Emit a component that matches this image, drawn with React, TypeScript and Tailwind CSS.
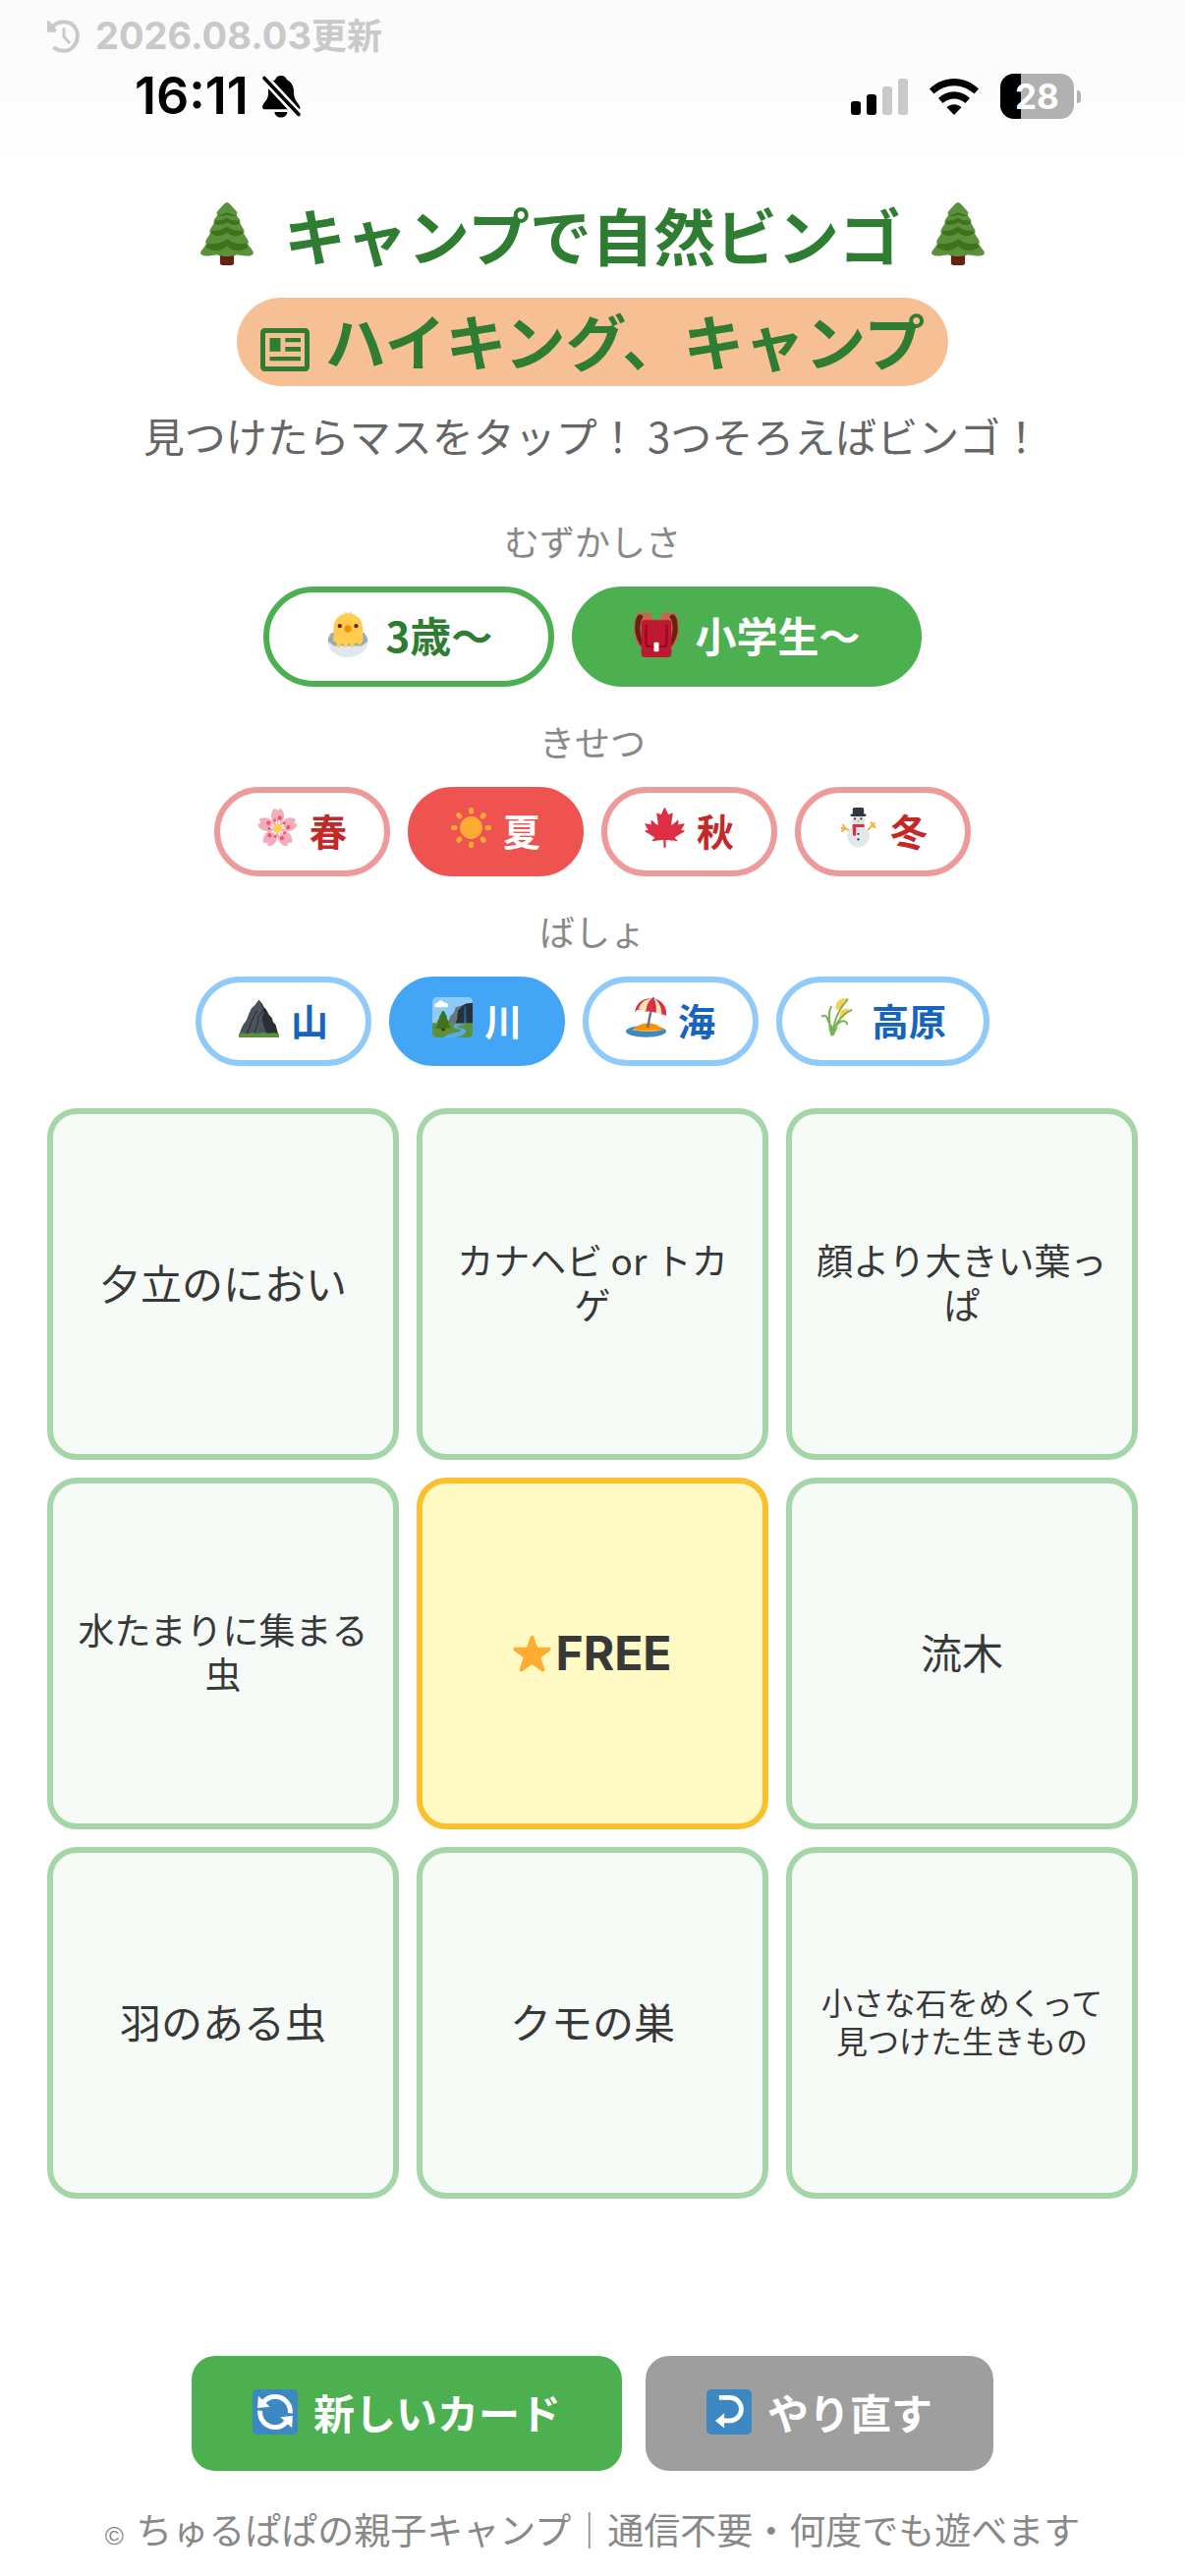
import { FunctionComponent, ReactNode, useState } from "react";

type IconProps = {
  className?: string;
};

type EmojiProps = IconProps & {
  children: ReactNode;
};

const Emoji: FunctionComponent<EmojiProps> = ({ className = "", children }) => (
  <svg viewBox="0 0 36 36" aria-hidden="true" className={`shrink-0 ${className}`}>
    {children}
  </svg>
);

const Tree: FunctionComponent<IconProps> = ({ className }) => (
  <Emoji className={className}>
    <path fill="#662113" d="M14 28h8v6.500q0 1.500-1.500 1.500h-5q-1.500 0-1.500-1.500z" />
    <path
      fill="#5c913b"
      d="M18 0c1.200 0 2.500 2 4.800 4.300.8.800 1.600 2.200.6 2.800.8 1.800 3 3.500 2 4.600 .8 2 3.400 4.600 2.200 5.900 .8 2.300 3.700 4.600 2.300 6 1 2.400 4 4.400 3 6.100-1.200 1.700-6.400.6-9 .2-3.600 1.300-8.200 1.300-11.800 0-2.600.4-7.800 1.500-9-.2-1-1.700 2-3.700 3-6.100-1.400-1.400 1.500-3.700 2.300-6-1.200-1.300 1.400-3.900 2.200-5.900-1-1.100 1.200-2.800 2-4.600-1-.6-.2-2 .6-2.800C15.500 2 16.800 0 18 0z"
    />
    <path fill="#3e721d" d="M12.600 7.500Q16 7 18 5.600q2 1.400 5.400 1.900-3.400 1-5.400-.4-2 1.400-5.400.4z" />
    <path fill="#3e721d" d="M10.600 11.900 11.800 10.400q3.400.4 6.200-1.600 2.800 2 6.200 1.600l1.200 1.500q-4 2.400-7.400-.6-3.400 3-7.400.6z" />
    <path fill="#3e721d" d="M8.500 17.600 10 16q4.400.7 8-2.200 3.600 2.900 8 2.200l1.500 1.600q-5 3.600-9.500-.4-4.500 4-9.500.4z" />
    <path fill="#3e721d" d="M5.600 25.600 7.400 23.400q6 1.200 10.600-2.400 4.600 3.600 10.600 2.400l1.800 2.200q-6.400 4.400-12.400-.6-6 5-12.400.6z" />
  </Emoji>
);

const Chick: FunctionComponent<IconProps> = ({ className }) => (
  <Emoji className={className}>
    <path fill="#99aab5" d="M5 16.500C3 19 1.500 22 2.500 25l4.500 3h22l4.500-3c1-3-.5-6-2.500-8.500z" />
    <path fill="#e1e8ed" d="M2.400 23.500c-.6 7 6.600 12.500 15.600 12.500s16.200-5.500 15.600-12.500L29 27H7z" />
    <path
      fill="#ffcc4d"
      d="M18 1.400C17 .2 16 .2 15 .3l1 1C9 2.400 6.500 8 6.500 14v9l1.800.8 2.400 5.200 3-4.300 2.800 4 2.300-4 3 4 2.400-4.500 3.500 2 2.300-3.200V14C30 8 27 2.400 20.500 1.300l1-1C20 .2 19 .2 18 1.400z"
    />
    <circle cx="11.600" cy="11" r="1.700" fill="#662113" />
    <circle cx="24.600" cy="11" r="1.700" fill="#662113" />
    <circle cx="18" cy="13.300" r="2.900" fill="#f4900c" />
  </Emoji>
);

const Backpack: FunctionComponent<IconProps> = ({ className }) => (
  <Emoji className={className}>
    <path fill="#c1694f" d="M0 13C0 5 2 .5 5 .2h7c2 .6 2.500 3 3 5.800v4H7v15L4 27C1 23 0 18 0 13zM36 13c0-8-2-12.500-5-12.800h-7c-2 .6-2.500 3-3 5.800v4h8v15l3 2c3-4 4-9 4-14z" />
    <path fill="#662113" d="M1 13c0-7 1.500-10.800 4-11 2 0 2.800 1.300 2 2.500C5.500 7 5 10 5 13c0 4 1 7 1.500 9v6C3 24 1 18 1 13zM35 13c0-7-1.500-10.800-4-11-2 0-2.800 1.300-2 2.500C30.500 7 31 10 31 13c0 4-1 7-1.500 9v6c3.500-4 5.500-10 5.500-15z" />
    <rect x="6" y="6" width="24" height="30" rx="3" fill="#be1931" />
    <path fill="none" stroke="#a0041e" strokeWidth="1.800" strokeLinecap="round" d="M9.800 11v14q0 2.500 2.500 2.500h11.400q2.500 0 2.500-2.500V11" />
    <path fill="#c1694f" d="M7 6.500Q8 6 9.500 6h17q1.500 0 2.500.5z" />
    <rect x="16" y="24" width="4" height="7.500" rx="1" fill="#fff" />
  </Emoji>
);

const petals = [0, 72, 144, 216, 288];

const Blossom: FunctionComponent<IconProps> = ({ className }) => (
  <Emoji className={className}>
    {petals.map((angle) => (
      <g key={angle} transform={`rotate(${angle} 18 18.500)`}>
        <path fill="#f4abba" d="M18 18.500C14 14 11.600 10 12.300 6c.5-3 2-4.600 3.300-5.200.8-.3 1 .7 1.600 1.800l.8-1 .8 1c.6-1.100.800-2.100 1.600-1.800C21.700 1.400 23.200 3 23.700 6c.7 4-1.700 8-5.700 12.500z" />
      </g>
    ))}
    {petals.map((angle) => (
      <g key={angle} transform={`rotate(${angle} 18 18.500)`}>
        <path stroke="#fff" strokeWidth="1.400" d="m18 18.500-1.200-6.500M18 18.500l2-6.500" />
        <circle cx="20" cy="9.200" r="1.900" fill="#ea596e" />
        <circle cx="15.500" cy="11.500" r="1.300" fill="#ea596e" />
      </g>
    ))}
    <circle cx="18" cy="18.500" r="4" fill="#ffcc4d" />
  </Emoji>
);

const rays = [0, 45, 90, 135, 180, 225, 270, 315];

const Sun: FunctionComponent<IconProps> = ({ className }) => (
  <Emoji className={className}>
    <circle cx="18" cy="18" r="10" fill="#ffac33" />
    {rays.map((angle) => (
      <rect key={angle} x="15.800" y="0" width="4.400" height="5.800" rx="2.200" fill="#ffac33" transform={`rotate(${angle} 18 18)`} />
    ))}
  </Emoji>
);

const MapleLeaf: FunctionComponent<IconProps> = ({ className }) => (
  <Emoji className={className}>
    <path
      fill="#dd2e44"
      d="M36 20.917c0-.688-2.895-.5-3.125-1s3.208-4.584 2.708-5.500-5.086 1.167-5.375.708c-.288-.458.292-3.500-.208-3.875s-5.250 4.916-5.917 4.292c-.666-.625 1.542-10.500 1.086-10.698-.456-.198-3.419 1.365-3.793 1.282C21.002 6.042 18.682 0 18 0s-3.002 6.042-3.376 6.125c-.374.083-3.337-1.480-3.793-1.282-.456.198 1.752 10.073 1.085 10.698C11.250 16.166 6.500 10.875 6 11.250s.08 3.417-.208 3.875c-.289.458-4.875-1.625-5.375-.708s2.939 5 2.708 5.500-3.125.312-3.125 1 8.438 5.235 9 5.771c.562.535-2.914 2.802-2.417 3.229.576.496 3.839-.83 10.417-.957V35c0 .553.448 1 1 1 .553 0 1-.447 1-1v-6.040c6.577.127 9.841 1.453 10.417.957.496-.428-2.979-2.694-2.417-3.229.562-.536 9-5.084 9-5.771z"
    />
  </Emoji>
);

const Snowman: FunctionComponent<IconProps> = ({ className }) => (
  <Emoji className={className}>
    <path fill="none" stroke="#ffac33" strokeWidth="1.700" strokeLinecap="round" strokeLinejoin="round" d="m10.500 20.500-4-1.800m-3.300-.2 3.300.2M4.500 15.500l2 3.200M3.500 21l3-2.300M26 20.500l4.500-4.500m-1-3 1 3 2.500 1.500M30.500 16l2-2" />
    <circle cx="18" cy="25.500" r="10" fill="#e1e8ed" />
    <circle cx="18" cy="12" r="6" fill="#e1e8ed" />
    <path fill="#dd2e44" d="M12.800 15h10.600v2.600h-7.400v7q-1.300 1.200-2.800.2z" />
    <path fill="#31373d" d="M13 6.500V1.500Q13 0 14.500 0h7Q23 0 23 1.500v5z" />
    <rect x="11" y="5.800" width="14" height="2" rx="1" fill="#31373d" />
    <circle cx="15" cy="10" r="1" fill="#31373d" />
    <circle cx="20.600" cy="10" r="1" fill="#31373d" />
    <circle cx="18" cy="12" r="1" fill="#ffac33" />
    <circle cx="18" cy="23.500" r="1" fill="#31373d" />
    <circle cx="18" cy="28.500" r="1" fill="#31373d" />
  </Emoji>
);

const Mountain: FunctionComponent<IconProps> = ({ className }) => (
  <Emoji className={className}>
    <path fill="#292f33" d="m18 2.500 3 3.500 1.500 3 2 2 2.500 4.500 3 3.500.500 3 2.500 2.500L35.500 34h-35l2.500-7.500 4-6 4-10 4-4z" />
    <path fill="#4b545d" d="m18 2.500 2 4 2 4.500.500 3-1.500 4 1.500 6 3.500 9H.6L3 26.500l2-3.500 2-1 2-7 2.500-4 2-2.500z" />
    <path fill="none" stroke="#292f33" strokeWidth=".9" d="m16.500 12-3 5-2.500 6-3.500 9M22.400 11l-4.800 6.500-.6 5-3 9.500M21 18l1.500 7 3 7" />
    <path fill="#5c913b" d="M0 36v-3.500l4-.5 4 .6 4-.8 5 .7 5-.8 4 .5 5-.3 5 .6V36z" />
  </Emoji>
);

const River: FunctionComponent<IconProps> = ({ className }) => (
  <Emoji className={className}>
    <rect width="36" height="36" rx="4" fill="#8ccaf7" />
    <path fill="#fff" d="M4 9Q1.500 9 2 7t2.500-1.700Q5.500 2.500 8 3t2.500 2Q13.500 4.500 14 7t-2 2z" />
    <path fill="#66757f" d="M13 26 16 17l3-3 2-5 5-1.500 10 1V26z" />
    <path fill="#292f33" d="m20 25 2-5 1-8 4-4.500 3-1.800 6-.7v21z" />
    <path fill="#226699" d="M28.500 9 30 7.500 30.500 25H28z" />
    <path fill="#5c913b" d="M0 23h36v9q0 4-4 4H4q-4 0-4-4z" />
    <path fill="#55acee" d="M29.500 24h-7q-5 .8-3.500 2.800 1.500 1.200 5 1.700 3 1 0 2.500-9 1.500-14.500 5H20q9-1.500 10-5.500 0-2.500-7-3.500-2-.8 1-1.500 4-.5 5.500-1.500z" />
    <rect x="8" y="26" width="3.500" height="4" rx="1" fill="#662113" />
    <path fill="#3e721d" d="M9.600 12q1 0 2 2.500t1.500 2.800-.2 1.200q.8 2.500 2 3.500 0 1-.8 1.200.500 2 2.400 3.400 0 1.300-2.500.900-4 1-8.500.3-3 .3-3-.8 2.300-1.800 2.600-3.600-1-.2-1-1.200 1.500-1.500 2.200-3.700-.6-.6.200-1.500T8 14q.8-2 1.600-2z" />
  </Emoji>
);

const Beach: FunctionComponent<IconProps> = ({ className }) => (
  <Emoji className={className}>
    <ellipse cx="18" cy="30.500" rx="18" ry="5.300" fill="#3b88c3" />
    <path fill="#ffac33" d="M5.500 29.500Q12 23 20 23t13.500 6.500Q27 31 18 30.700T5.500 29.500z" />
    <path fill="#f4900c" d="M7 29.200Q12 23.500 20 23.500t13.500 5.800Q31 30.500 28 29.300q-4-1-8 .2-6-1-13-.3z" />
    <path fill="none" stroke="#66757f" strokeWidth="2.200" d="m22.300 12-2.800 15" />
    <path fill="#dd2e44" d="M24.300.8C15 .5 9 5 8 14q1.500-3.500 5-3 2.500-1 5 2.500 3-2 8.500.5 3-1.500 5 1.500 3-.5 4.500 1.500C37 9 33 3 24.300.8z" />
    <path fill="#ffe8b6" d="M23.500.8C16.500 2 12 6 11.500 11q4-1 6.500 2.500C18 8 20 3.500 23.500.8zM25 .8c2 4 2.500 9 1.700 13.500q3-1.500 5.300 1.700C32 9 29.500 4 25 .8z" />
    <path stroke="#66757f" strokeWidth="1.600" d="M24.500 0v2" />
  </Emoji>
);

const Rice: FunctionComponent<IconProps> = ({ className }) => (
  <Emoji className={className}>
    <path fill="#ffcc4d" d="M15 11c-2-5 3-11 9.500-10q-3 3-4 6-2 5-5.500 4zM18 19.500c-1-6 3-11 8.300-9q-1 3-3 5-2.500 4-5.300 4z" />
    <path fill="none" stroke="#77b255" strokeWidth="1.700" strokeLinecap="round" d="M25 2C20 8 13 17 12 33M28.500 11.500C22 14 14 22 12.500 33M10.500 8.500C7 14 9 24 11 33M2.500 17C6 15 7.500 19 8 22M14 27c4-7 8-6 9.500-5q1.500 1 1 2" />
    <path fill="#77b255" d="M8 21q0 7 2 13.500h2.500L17 26l-4 3-2-5-1 4z" />
  </Emoji>
);

const Star: FunctionComponent<IconProps> = ({ className }) => (
  <Emoji className={className}>
    <path fill="#ffac33" stroke="#ffac33" strokeWidth="3.600" strokeLinejoin="round" d="m18 2.600 3.800 11h12L24.200 20.800 28 32.800l-10-7.200-10 7.200 3.800-12L2.200 13.600h12z" />
  </Emoji>
);

const Reload: FunctionComponent<IconProps> = ({ className }) => (
  <Emoji className={className}>
    <rect width="36" height="36" rx="4" fill="#3b88c3" />
    {[0, 180].map((angle) => (
      <g key={angle} transform={`rotate(${angle} 18 18)`}>
        <path fill="none" stroke="#fff" strokeWidth="3.800" d="M30 19A12 12 0 0 0 8.500 10.500" />
        <path fill="#fff" d="M4.600 5.300 4 14.900l9.800-1.100z" />
      </g>
    ))}
  </Emoji>
);

const Undo: FunctionComponent<IconProps> = ({ className }) => (
  <Emoji className={className}>
    <rect width="36" height="36" rx="4" fill="#3b88c3" />
    <path fill="none" stroke="#fff" strokeWidth="3.800" d="M10 6.600h8.500a9.200 9.200 0 0 1 0 18.400H13" />
    <path fill="#fff" d="m7 25 7.200-6v12z" />
  </Emoji>
);

const StatusBar = () => (
  <div className="flex items-center justify-between pl-[137px] pr-[106px] h-[46px]">
    <div className="flex items-center gap-[14px] text-[52px] leading-[46px] font-semibold text-black font-['Inter',sans-serif]">
      16:11
      <svg viewBox="0 0 39 43" aria-hidden="true" className="w-[39px] h-[43px]">
        <path d="M19 0c3 0 5 1.500 5.800 4C30 6.500 32 11 32 17c0 9 5.500 11 6.500 15.500 0 1.500-1 1.800-2.500 1.800H3C1 34.300 0 33.500 0 32c.5-5.500 6.500-6 6-15C6 11 8.500 6.500 13.200 4 14 1.500 16 0 19 0zM12.300 37h13.200c-.5 3.500-3 5.500-6.600 5.500s-6-2-6.600-5.500z" />
        <path d="M0 0 39 42" stroke="#fdfdfd" strokeWidth="9" />
        <path d="M2 2.500 37 39.500" stroke="#000" strokeWidth="3.600" strokeLinecap="round" />
      </svg>
    </div>
    <div className="flex items-center">
      <svg viewBox="0 0 58 37" aria-hidden="true" className="w-[58px] h-[37px]">
        <rect x="0" y="23" width="10" height="14" rx="3" />
        <rect x="16" y="16" width="10" height="21" rx="3" />
        <rect x="32" y="8" width="10" height="29" rx="3" fill="#c9c9c9" />
        <rect x="48" y="0" width="10" height="37" rx="3" fill="#c9c9c9" />
      </svg>
      <svg viewBox="0 0 50 37" aria-hidden="true" className="w-[50px] h-[37px] ml-[22px]">
        <path d="M0 10.500C14-3.500 36-3.500 50 10.500l-4.500 5C33 4.500 17 4.500 4.500 15.500z" />
        <path d="M9 20c9-9 23-9 32 0l-4.600 5c-6.500-6-16.300-6-22.800 0z" />
        <path d="M17.500 29.200c4.300-4 10.700-4 15 0L25 37z" />
      </svg>
      <div className="ml-[22px] w-[75px] h-[46px] flex items-center">
        <div className="w-full h-[46px] rounded-[14px] bg-[linear-gradient(90deg,#000_28%,#b1b1b1_28%)] text-center text-[35px] leading-[46px] font-bold text-white font-['Inter',sans-serif]">
          28
        </div>
      </div>
      <div className="ml-[3px] w-1 h-[13px] rounded-r-full bg-[#b1b1b1]" />
    </div>
  </div>
);

type ChoiceProps = {
  label: string;
  icon: FunctionComponent<IconProps>;
  selected: boolean;
  tone: "green" | "red" | "blue";
  onSelect: () => void;
};

const tones = {
  green: { on: "border-[#4caf50] bg-[#4caf50] text-white", off: "border-[#4caf50] bg-white text-[#2e7d32]" },
  red: { on: "border-[#ef5350] bg-[#ef5350] text-white", off: "border-[#ef9a9a] bg-white text-[#c62828]" },
  blue: { on: "border-[#42a5f5] bg-[#42a5f5] text-white", off: "border-[#90caf9] bg-white text-[#1565c0]" },
};

const Choice: FunctionComponent<ChoiceProps> = ({ label, icon: Icon, selected, tone, onSelect }) => {
  const large = tone === "green";
  return (
    <button
      type="button"
      aria-pressed={selected}
      onClick={onSelect}
      className={`flex items-center rounded-full border-6 font-bold whitespace-nowrap ${
        large ? "h-[102px] px-[57px] gap-4 text-[42px]" : "h-[91px] px-[38px] gap-3 text-[38px]"
      } ${selected ? tones[tone].on : tones[tone].off}`}
    >
      <Icon className={large ? "size-[46px] mb-1" : "size-[41px] mb-2"} />
      <span className="leading-[54px] mb-1">{label}</span>
    </button>
  );
};

type Option = {
  label: string;
  icon: FunctionComponent<IconProps>;
};

type ChoiceGroupProps = {
  title: string;
  tone: "green" | "red" | "blue";
  options: Option[];
  initial: string;
};

const ChoiceGroup: FunctionComponent<ChoiceGroupProps> = ({ title, tone, options, initial }) => {
  const [value, setValue] = useState(initial);
  return (
    <section className="flex flex-col items-center gap-5">
      <h2 className="text-[36px] leading-[54px] text-[#888]">{title}</h2>
      <div className="flex justify-center gap-[18px]">
        {options.map((option) => (
          <Choice
            key={option.label}
            label={option.label}
            icon={option.icon}
            tone={tone}
            selected={option.label === value}
            onSelect={() => setValue(option.label)}
          />
        ))}
      </div>
    </section>
  );
};

const levels: Option[] = [
  { label: "3歳〜", icon: Chick },
  { label: "小学生〜", icon: Backpack },
];

const seasons: Option[] = [
  { label: "春", icon: Blossom },
  { label: "夏", icon: Sun },
  { label: "秋", icon: MapleLeaf },
  { label: "冬", icon: Snowman },
];

const places: Option[] = [
  { label: "山", icon: Mountain },
  { label: "川", icon: River },
  { label: "海", icon: Beach },
  { label: "高原", icon: Rice },
];

const cells = [
  "夕立のにおい",
  "カナヘビ or トカゲ",
  "顔より大きい葉っぱ",
  "水たまりに集まる虫",
  "FREE",
  "流木",
  "羽のある虫",
  "クモの巣",
  "小さな石をめくって見つけた生きもの",
];

// longer phrases get a smaller face so they stay on two lines
const cellText = (text: string) => {
  if (text.length > 12) return "text-[32px] leading-[39px]";
  if (text.length > 7) return "text-[37px] leading-[45px]";
  return "text-[42px] leading-[54px]";
};

const BingoCell: FunctionComponent<{ text: string }> = ({ text }) => {
  if (text === "FREE") {
    return (
      <button
        type="button"
        className="aspect-square flex items-center justify-center gap-1 rounded-[30px] border-6 border-[#fbc02d] bg-[#fff9c4] text-[48px] font-bold text-[#383838] font-['Inter',sans-serif]"
      >
        <Star className="size-[39px]" />
        FREE
      </button>
    );
  }
  return (
    <button
      type="button"
      className={`aspect-square flex items-center justify-center rounded-[30px] border-6 border-[#a5d6a7] bg-[#f6fbf8] px-[18px] pb-1 text-[#383838] ${cellText(text)}`}
    >
      {text}
    </button>
  );
};

const App = () => (
  <div className="bg-[linear-gradient(180deg,#fafafa_0px,#fff_170px)] text-[#383838] font-['Noto_Sans_CJK_JP',sans-serif]">
    <div className="flex items-center gap-4 pt-4 pl-12 text-[#c9c9c9]">
      <svg viewBox="0 0 33 34" fill="none" aria-hidden="true" className="w-[33px] h-[34px]">
        <path d="M4 9.500C10.500-.5 24.500 0 29.500 10c4.500 10.500-3 22.200-13 21.800-3.500 0-6-1-8.500-2.600" stroke="currentColor" strokeWidth="4" strokeLinecap="round" />
        <path d="M0 1.500C1 .5 2 1 3 2.300l6 7.200c1 1.500.5 3.300-1.500 3.300H1.500C.5 12.800 0 12.300 0 11z" fill="currentColor" />
        <path d="M17 9.500v7.800l5 5.700" stroke="currentColor" strokeWidth="3" strokeLinecap="round" strokeLinejoin="round" />
      </svg>
      <span className="text-[38px] leading-10 font-bold font-['Inter','Noto_Sans_CJK_JP',sans-serif]">
        2026.08.03<span className="text-[36px]">更新</span>
      </span>
    </div>
    <div className="pt-[18px]">
      <StatusBar />
    </div>

    <main className="flex flex-col px-12 pt-[74px] pb-[18px]">
      <h1 className="flex flex-col items-center gap-[22px] font-bold text-[#2e7d32]">
        <span className="flex items-center gap-[26px] text-[63px] leading-[86px] whitespace-nowrap">
          <Tree className="size-[64px]" />
          キャンプで自然ビンゴ
          <Tree className="size-[64px]" />
        </span>
        <span className="flex items-center gap-4 rounded-full bg-[#f7c094] px-6 pb-1 text-[62px] leading-[86px] whitespace-nowrap">
          <svg viewBox="0 0 50 44" aria-hidden="true" className="w-[50px] h-[44px] mt-5 fill-current">
            <rect x="2.500" y="2.500" width="45" height="39" rx="2" fill="none" stroke="currentColor" strokeWidth="5" />
            <path d="M9.500 10h11v13.700h-11zM25.300 10H41v4.200H25.300zM25.300 19H41v4.700H25.300zM9.500 29H41v4.200H9.500z" />
          </svg>
          ハイキング、キャンプ
        </span>
      </h1>
      <p className="mt-5 text-center text-[42px] leading-[60px] text-[#666]">
        見つけたらマスをタップ！ 3つそろえばビンゴ！
      </p>

      <div className="mt-[50px] flex flex-col gap-7">
        <ChoiceGroup title="むずかしさ" tone="green" options={levels} initial="小学生〜" />
        <ChoiceGroup title="きせつ" tone="red" options={seasons} initial="夏" />
        <ChoiceGroup title="ばしょ" tone="blue" options={places} initial="川" />
      </div>

      <div className="mt-[43px] grid grid-cols-3 gap-[18px]">
        {cells.map((text) => (
          <BingoCell key={text} text={text} />
        ))}
      </div>

      <div className="mt-40 flex justify-center gap-6 text-[42px] leading-[54px] font-bold text-white">
        <button type="button" className="flex items-center gap-4 h-[117px] px-[62px] rounded-3xl bg-[#4caf50]">
          <Reload className="size-[46px] mb-1" />
          <span className="mb-1">新しいカード</span>
        </button>
        <button type="button" className="flex items-center gap-4 h-[117px] px-[62px] rounded-3xl bg-[#9e9e9e]">
          <Undo className="size-[46px] mb-1" />
          <span className="mb-1">やり直す</span>
        </button>
      </div>

      <footer className="mt-8 text-center text-[37px] leading-[54px] text-[#888]">
        <span className="mr-1 text-[26px] font-['Liberation_Sans',sans-serif]">©</span> ちゅるぱぱの親子キャンプ｜通信不要・何度でも遊べます
      </footer>
    </main>
  </div>
);

export default App;
